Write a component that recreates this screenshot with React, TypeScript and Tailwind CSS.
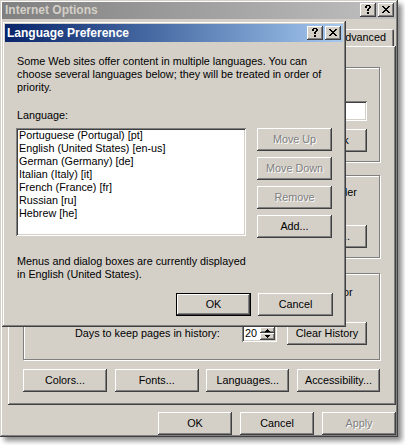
import React from "react";

const RAISED =
  "shadow-[inset_-1px_-1px_0_#404040,inset_1px_1px_0_#ffffff,inset_-2px_-2px_0_#808080,inset_2px_2px_0_#d4d0c8]";
const WINFRAME =
  "shadow-[inset_-1px_-1px_0_#404040,inset_1px_1px_0_#d4d0c8,inset_-2px_-2px_0_#808080,inset_2px_2px_0_#ffffff]";
const SUNKEN =
  "shadow-[inset_1px_1px_0_#808080,inset_-1px_-1px_0_#ffffff,inset_2px_2px_0_#404040,inset_-2px_-2px_0_#d4d0c8]";
const DIS = "text-[#808080] [text-shadow:1px_1px_0_#ffffff]";

function Button({
  label,
  className = "",
  labelClassName = "",
  disabled = false,
  isDefault = false,
}: {
  label: string;
  className?: string;
  labelClassName?: string;
  disabled?: boolean;
  isDefault?: boolean;
}) {
  return (
    <div className={`${isDefault ? "border border-black" : ""} ${className}`}>
      <div
        className={`flex h-full w-full items-center justify-center whitespace-nowrap bg-[#d4d0c8] ${RAISED} ${
          disabled ? DIS : "text-black"
        } ${labelClassName}`}
      >
        {label}
      </div>
    </div>
  );
}

function CloseGlyph() {
  const rows: [number, number][][] = [
    [[0, 2], [6, 2]],
    [[1, 2], [5, 2]],
    [[2, 4]],
    [[3, 2]],
    [[2, 4]],
    [[1, 2], [5, 2]],
    [[0, 2], [6, 2]],
  ];
  return (
    <svg width="8" height="7" viewBox="0 0 8 7" shapeRendering="crispEdges">
      {rows.map((r, y) =>
        r.map(([x, w], i) => <rect key={`${y}-${i}`} x={x} y={y} width={w} height={1} fill="#000" />)
      )}
    </svg>
  );
}

function HelpGlyph() {
  const rows: [number, number][][] = [
    [[1, 4]],
    [[0, 2], [4, 2]],
    [[0, 2], [4, 2]],
    [[3, 2]],
    [[2, 2]],
    [[2, 2]],
    [],
    [[2, 2]],
    [[2, 2]],
  ];
  return (
    <svg width="6" height="9" viewBox="0 0 6 9" shapeRendering="crispEdges">
      {rows.map((r, y) =>
        r.map(([x, w], i) => <rect key={`${y}-${i}`} x={x} y={y} width={w} height={1} fill="#000" />)
      )}
    </svg>
  );
}

function CapButton({ children }: { children: React.ReactNode }) {
  return (
    <div className={`flex h-[14px] w-[16px] items-center justify-center bg-[#d4d0c8] pb-[1px] pr-[1px] ${RAISED}`}>
      {children}
    </div>
  );
}

function Group({
  label,
  className = "",
  children,
}: {
  label: string;
  className?: string;
  children?: React.ReactNode;
}) {
  return (
    <div
      className={`relative border border-[#808080] shadow-[inset_1px_1px_0_#ffffff,1px_1px_0_#ffffff] ${className}`}
    >
      <span className="absolute -top-[7px] left-[8px] bg-[#d4d0c8] px-[2px] leading-[13px]">{label}</span>
      {children}
    </div>
  );
}

function Tab({ label, className = "", selected = false }: { label: string; className?: string; selected?: boolean }) {
  return (
    <div
      className={`flex shrink-0 items-center rounded-t-[2px] bg-[#d4d0c8] shadow-[inset_1px_1px_0_#ffffff,inset_-1px_0_0_#404040,inset_-2px_0_0_#808080] ${
        selected ? "relative z-10 -mb-[1px] h-[20px]" : "h-[17px]"
      } ${className}`}
    >
      {label}
    </div>
  );
}

function Spin() {
  return (
    <div className={`flex h-[17px] w-[35px] bg-white p-[2px] ${SUNKEN}`}>
      <div className="flex-1 pl-[1px] leading-[13px]">20</div>
      <div className="flex w-[15px] flex-col">
        <div className={`flex flex-1 items-center justify-center bg-[#d4d0c8] ${RAISED}`}>
          <svg width="5" height="3" viewBox="0 0 5 3" shapeRendering="crispEdges">
            <path d="M2 0h1v1h1v1h1v1H0V2h1V1h1z" fill="#000" />
          </svg>
        </div>
        <div className={`flex flex-1 items-center justify-center bg-[#d4d0c8] ${RAISED}`}>
          <svg width="5" height="3" viewBox="0 0 5 3" shapeRendering="crispEdges">
            <path d="M0 0h5v1H4v1H3v1H2V2H1V1H0z" fill="#000" />
          </svg>
        </div>
      </div>
    </div>
  );
}

export default function App() {
  const langs = [
    "Portuguese (Portugal) [pt]",
    "English (United States) [en-us]",
    "German (Germany) [de]",
    "Italian (Italy) [it]",
    "French (France) [fr]",
    "Russian [ru]",
    "Hebrew [he]",
  ];

  return (
    <div className="relative h-[445px] w-[405px] overflow-hidden bg-white font-['Liberation_Sans',Arial,sans-serif] text-[10.8px] leading-[13px] text-black">
      {/* Internet Options (inactive, behind) */}
      <div
        className={`absolute isolate left-0 top-0 h-[437px] w-[398px] bg-[#d4d0c8] p-[2px] shadow-[inset_-1px_-1px_0_#404040,inset_1px_1px_0_#d4d0c8,inset_-2px_-2px_0_#808080,inset_2px_2px_0_#ffffff,4px_4px_5px_rgba(0,0,0,0.45)]`}
      >
        <div className="flex h-full flex-col overflow-hidden">
          <div className="flex h-[17px] items-center bg-gradient-to-r from-[#808080] to-[#c0c0c0] pl-[3px] pr-[2px]">
            <span className="flex-1 text-[12px] font-bold text-[#d4d0c8]">Internet Options</span>
            <div className="flex gap-[2px]">
              <CapButton>
                <HelpGlyph />
              </CapButton>
              <CapButton>
                <CloseGlyph />
              </CapButton>
            </div>
          </div>

          {/* tabs */}
          <div className="ml-[6px] mr-[2px] mt-[8px] flex h-[19px] items-end">
            <Tab label="General" selected className="w-[50px] justify-center" />
            <Tab label="Security" className="w-[52px] justify-center" />
            <Tab label="Privacy" className="w-[46px] justify-center" />
            <Tab label="Content" className="w-[50px] justify-center" />
            <Tab label="Connections" className="w-[68px] justify-center" />
            <Tab label="Programs" className="w-[62px] justify-center" />
            <Tab label="Advanced" className="w-[58px] justify-start pl-[2px]" />
          </div>

          {/* tab panel */}
          <div className={`ml-[6px] flex h-[364px] flex-col bg-[#d4d0c8] pl-[15px] pr-[16px] pt-[21px] ${RAISED}`}>
            <Group label="Home page" className="h-[95px]">
              <div className="flex flex-col pl-[51px] pr-[12px] pt-[12px]">
                <div className="h-[13px] whitespace-nowrap">You can change which page to use for your home page.</div>
                <div className="mt-[8px] flex h-[20px] items-center">
                  <span>Address:</span>
                  <div className={`ml-[8px] h-[20px] flex-1 bg-white px-[3px] leading-[20px] ${SUNKEN}`}>about:blank</div>
                </div>
                <div className="mt-[8px] flex justify-end gap-[6px]">
                  <Button label="Use Current" className="h-[23px] w-[75px]" />
                  <Button label="Use Default" className="h-[23px] w-[75px]" />
                  <Button label="Use Blank" className="h-[23px] w-[75px]" labelClassName="pr-[11px]" />
                </div>
              </div>
            </Group>

            <Group label="Temporary Internet files" className="mt-[13px] h-[83px]">
              <div className="flex flex-col pl-[51px] pr-[12px] pt-[10px]">
                <div className="-ml-[5px] whitespace-nowrap">Pages you view on the Internet are stored in a special folder</div>
                <div className="-ml-[5px] whitespace-nowrap">for quick viewing later.</div>
                <div className="mt-[13px] flex justify-end gap-[6px]">
                  <Button label="Delete Cookies..." className="h-[23px] w-[90px]" />
                  <Button label="Delete Files..." className="h-[23px] w-[75px]" />
                  <Button label="Settings..." className="h-[23px] w-[75px]" labelClassName="pr-[7px]" />
                </div>
              </div>
            </Group>

            <Group label="History" className="mt-[15px] h-[87px]">
              <div className="flex flex-col pl-[51px] pr-[12px] pt-[12px]">
                <div className="-ml-[6px] whitespace-nowrap">The History folder contains links to pages you&apos;ve visited, for</div>
                <div className="-ml-[6px] whitespace-nowrap">quick access to recently viewed pages.</div>
                <div className="mt-[10px] flex h-[23px] items-center">
                  <span>Days to keep pages in history:</span>
                  <div className="ml-auto mr-[10px]">
                    <Spin />
                  </div>
                  <Button label="Clear History" className="h-[23px] w-[80px]" />
                </div>
              </div>
            </Group>

            <div className="mt-[9px] flex justify-between">
              <Button label="Colors..." className="h-[23px] w-[84px]" />
              <Button label="Fonts..." className="h-[23px] w-[84px]" />
              <Button label="Languages..." className="h-[23px] w-[83px]" />
              <Button label="Accessibility..." className="h-[23px] w-[83px]" />
            </div>
          </div>

          {/* bottom buttons (clipped by window edge) */}
          <div className="mt-[7px] flex justify-end gap-[8px]">
            <Button label="OK" className="h-[23px] w-[74px]" />
            <Button label="Cancel" className="h-[23px] w-[74px]" />
            <Button label="Apply" disabled className="h-[23px] w-[74px]" />
          </div>
        </div>
      </div>

      {/* Language Preference (active dialog) */}
      <div className={`absolute left-[2px] top-[21px] z-20 flex h-[306px] w-[344px] flex-col bg-[#d4d0c8] p-[3px] ${WINFRAME}`}>
        <div className="flex h-[18px] items-center bg-gradient-to-r from-[#0a246a] to-[#a6caf0] pl-[2px] pr-[2px]">
          <span className="flex-1 text-[12px] font-bold text-white">Language Preference</span>
          <div className="flex gap-[2px]">
            <CapButton>
              <HelpGlyph />
            </CapButton>
            <CapButton>
              <CloseGlyph />
            </CapButton>
          </div>
        </div>

        <div className="flex flex-1 flex-col pl-[12px] pr-[10px]">
          <p className="mt-[13px]">
            Some Web sites offer content in multiple languages. You can
            <br />
            choose several languages below; they will be treated in order of
            <br />
            priority.
          </p>

          <div className="mt-[15px]">Language:</div>

          <div className="mt-[6px] flex">
            <div className={`-ml-[1px] h-[108px] w-[230px] bg-white pl-[3px] pt-[1px] ${SUNKEN}`}>
              {langs.map((l) => (
                <div key={l} className="h-[13px] whitespace-nowrap">
                  {l}
                </div>
              ))}
            </div>
            <div className="ml-[11px] flex flex-col gap-[6px]">
              <Button label="Move Up" disabled className="h-[23px] w-[75px]" />
              <Button label="Move Down" disabled className="h-[23px] w-[75px]" />
              <Button label="Remove" disabled className="h-[23px] w-[75px]" />
              <Button label="Add..." className="h-[23px] w-[75px]" />
            </div>
          </div>

          <p className="mt-[17px]">
            Menus and dialog boxes are currently displayed
            <br />
            in English (United States).
          </p>

          <div className="mt-[12px] flex justify-end gap-[7px]">
            <Button label="OK" isDefault className="h-[23px] w-[75px]" />
            <Button label="Cancel" className="h-[23px] w-[75px]" />
          </div>
        </div>
      </div>
    </div>
  );
}
